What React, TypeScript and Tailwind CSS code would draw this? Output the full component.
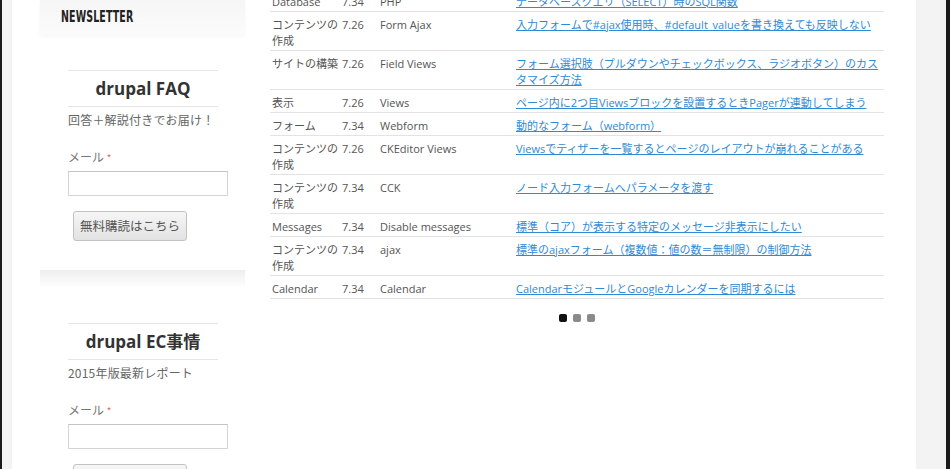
import React from 'react'

const rows = [
  ['Database', '7.34', 'PHP', 'データベースクエリ（SELECT）時のSQL関数'],
  ['コンテンツの作成', '7.26', 'Form Ajax', '入力フォームで#ajax使用時、#default_valueを書き換えても反映しない'],
  ['サイトの構築', '7.26', 'Field Views', 'フォーム選択肢（プルダウンやチェックボックス、ラジオボタン）のカスタマイズ方法'],
  ['表示', '7.26', 'Views', 'ページ内に2つ目Viewsブロックを設置するときPagerが連動してしまう'],
  ['フォーム', '7.34', 'Webform', '動的なフォーム（webform）'],
  ['コンテンツの作成', '7.26', 'CKEditor Views', 'Viewsでティザーを一覧するとページのレイアウトが崩れることがある'],
  ['コンテンツの作成', '7.34', 'CCK', 'ノード入力フォームへパラメータを渡す'],
  ['Messages', '7.34', 'Disable messages', '標準（コア）が表示する特定のメッセージ非表示にしたい'],
  ['コンテンツの作成', '7.34', 'ajax', '標準のajaxフォーム（複数値：値の数＝無制限）の制御方法'],
  ['Calendar', '7.34', 'Calendar', 'CalendarモジュールとGoogleカレンダーを同期するには'],
]

function SignupBlock({ title, lead }: { title: string; lead: string }) {
  return (
    <div className="pl-[28px]">
      <div className="w-[150px] border-y border-[#e6e6e6] py-[7px] text-center text-[17px] leading-[21px] font-bold text-[#333] font-['Open_Sans','Noto_Sans_CJK_JP',sans-serif]">
        {title}
      </div>
      <p className="mt-[5px] text-[12px] leading-[16px] tracking-[0.2px] text-[#666]">{lead}</p>
      <label className="mt-[21px] block text-[12px] leading-[16px] text-[#777]">
        メール <span className="text-[10px] text-[#e06a6a]">*</span>
      </label>
      <input
        type="text"
        className="mt-[5px] block h-[25px] w-[160px] border border-[#d4d4d4] border-t-[#c4c4c4] bg-white outline-none"
      />
      <button
        type="button"
        className="mt-[15px] ml-[5px] h-[30px] w-[114px] rounded-[3px] border border-[#c2c2c2] bg-gradient-to-b from-[#f6f6f6] to-[#e2e2e2] text-[12.5px] text-[#555]"
      >
        無料購読はこちら
      </button>
    </div>
  )
}

export default function App() {
  return (
    <div className="h-[469px] w-[950px] overflow-hidden border-l-2 border-r-4 border-[#1a1a1a] bg-[#f3f3f3] font-['Open_Sans','Noto_Sans_CJK_JP',sans-serif]">
      <div className="ml-[10px] flex h-full w-[904px] bg-white">
        <aside className="ml-[28px] w-[205px] shrink-0 font-['Noto_Sans_CJK_JP',sans-serif]">
          <div className="flex h-[35px] items-center bg-gradient-to-b from-[#f6f6f6] to-[#fbfbfb] pl-[21px] shadow-[0_2px_4px_rgba(0,0,0,0.03)]">
            <span className="inline-block origin-left scale-x-[0.7] text-[15px] font-bold tracking-[0.2px] text-[#222] font-['DejaVu_Sans_Condensed','DejaVu_Sans',sans-serif]">
              NEWSLETTER
            </span>
          </div>
          <div className="pt-[35px]">
            <SignupBlock title="drupal FAQ" lead="回答＋解説付きでお届け！" />
          </div>
          <div className="mt-[29px] h-[18px] bg-gradient-to-b from-[#eeeeee] to-white" />
          <div className="pt-[35px]">
            <SignupBlock title="drupal EC事情" lead="2015年版最新レポート" />
          </div>
        </aside>

        <main className="ml-[25px] w-[614px] shrink-0">
          <table className="mt-[-11px] w-[614px] table-fixed border-collapse text-[11px] leading-[16px] text-[#555]">
            <colgroup>
              <col className="w-[72px]" />
              <col className="w-[38px]" />
              <col className="w-[136px]" />
              <col className="w-[368px]" />
            </colgroup>
            <tbody>
              {rows.map((r, i) => (
                <tr key={i} className="border-b border-[#e3e3e3] align-top">
                  <td className="pt-[4.5px] pb-[1.5px] pl-[2px]">{r[0]}</td>
                  <td className="pt-[4.5px] pb-[1.5px]">{r[1]}</td>
                  <td className="pt-[4.5px] pb-[1.5px]">{r[2]}</td>
                  <td className="pt-[4.5px] pb-[1.5px]">
                    <a href="#" className="text-[#2f8ad6] underline">
                      {r[3]}
                    </a>
                  </td>
                </tr>
              ))}
            </tbody>
          </table>
          <div className="mt-[15px] flex justify-center gap-[6px]">
            <span className="h-[8px] w-[8px] rounded-[2px] bg-[#111]" />
            <span className="h-[8px] w-[8px] rounded-[2px] bg-[#8a8a8a]" />
            <span className="h-[8px] w-[8px] rounded-[2px] bg-[#8a8a8a]" />
          </div>
        </main>
      </div>
    </div>
  )
}
